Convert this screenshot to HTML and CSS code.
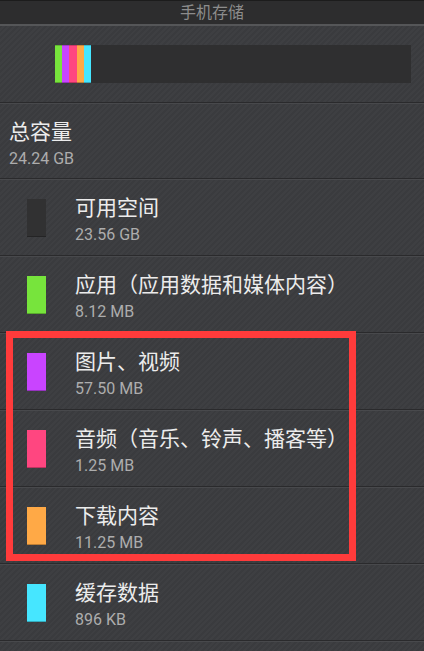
FILE: index.html
```html
<!DOCTYPE html>
<html lang="zh-CN">
<head>
    <meta charset="UTF-8">
    <meta name="viewport" content="width=device-width, initial-scale=1.0">
    <title>手机存储</title>
    <link rel="stylesheet" href="styles.css">
</head>
<body>
    <div class="screen">
        <div class="title-bar">手机存储</div>

        <div class="usage">
            <div class="usage-bar">
                <span class="seg green" style="width: 7px"></span>
                <span class="seg purple" style="width: 7px"></span>
                <span class="seg pink" style="width: 8px"></span>
                <span class="seg orange" style="width: 7px"></span>
                <span class="seg cyan" style="width: 7px"></span>
            </div>
        </div>

        <div class="total">
            <div class="item-title">总容量</div>
            <div class="item-size">24.24 GB</div>
        </div>

        <div class="item">
            <span class="swatch free"></span>
            <div class="item-text">
                <div class="item-title">可用空间</div>
                <div class="item-size">23.56 GB</div>
            </div>
        </div>
        <div class="item">
            <span class="swatch green"></span>
            <div class="item-text">
                <div class="item-title">应用（应用数据和媒体内容）</div>
                <div class="item-size">8.12 MB</div>
            </div>
        </div>
        <div class="item">
            <span class="swatch purple"></span>
            <div class="item-text">
                <div class="item-title">图片、视频</div>
                <div class="item-size">57.50 MB</div>
            </div>
        </div>
        <div class="item">
            <span class="swatch pink"></span>
            <div class="item-text">
                <div class="item-title">音频（音乐、铃声、播客等）</div>
                <div class="item-size">1.25 MB</div>
            </div>
        </div>
        <div class="item">
            <span class="swatch orange"></span>
            <div class="item-text">
                <div class="item-title">下载内容</div>
                <div class="item-size">11.25 MB</div>
            </div>
        </div>
        <div class="item">
            <span class="swatch cyan"></span>
            <div class="item-text">
                <div class="item-title">缓存数据</div>
                <div class="item-size">896 KB</div>
            </div>
        </div>

        <div class="highlight"></div>
    </div>
</body>
</html>
```

FILE: styles.css
```css
body {
    margin: 0;
    font-family: Roboto, "Noto Sans CJK SC", sans-serif;
    background-color: #3c3d40;
}
.screen {
    position: relative;
    width: 424px;
    height: 651px;
    overflow: hidden;
    background-color: #3c3d40;
    background-image: repeating-linear-gradient(135deg, #3e3f42 0 2px, #3a3b3e 2px 4px);
}
.title-bar {
    height: 23px;
    line-height: 24px;
    border-top: 1px solid #1c1c1c;
    border-bottom: 2px solid #555658;
    background-color: #2d2d2e;
    color: #8c8c8c;
    font-size: 16px;
    text-align: center;
}
.usage {
    height: 77px;
    padding: 19px 13px 0 55px;
    box-sizing: border-box;
    border-bottom: 1px solid #2a2a2c;
    box-shadow: 0 1px 0 #48494c;
}
.usage-bar {
    display: flex;
    height: 38px;
    background-color: #2f2f30;
}
.seg {
    box-sizing: border-box;
    border-top: 1px solid rgba(0,0,0,0.2);
    border-bottom: 1px solid rgba(0,0,0,0.25);
}
.green { background-color: #77e43c; }
.purple { background-color: #c944ff; }
.pink { background-color: #ff4680; }
.orange { background-color: #ffa946; }
.cyan { background-color: #46e6ff; }
.free { background-color: #313132; }
.total {
    height: 76px;
    padding: 16px 0 0 9px;
    box-sizing: border-box;
    border-bottom: 1px solid #2a2a2c;
    box-shadow: 0 1px 0 #48494c;
}
.item {
    display: flex;
    align-items: flex-start;
    height: 77px;
    padding: 20px 0 0 27px;
    box-sizing: border-box;
    border-bottom: 1px solid #2a2a2c;
    box-shadow: 0 1px 0 #48494c;
}
.swatch {
    flex: none;
    width: 19px;
    height: 38px;
    box-sizing: border-box;
    border-bottom: 1px solid rgba(0,0,0,0.25);
}
.item-text {
    margin-left: 29px;
    margin-top: -4px;
}
.item-title {
    font-size: 21px;
    line-height: 26px;
    color: #ececec;
    white-space: nowrap;
}
.item-size {
    margin-top: 4px;
    font-size: 16px;
    line-height: 20px;
    color: #adadad;
}
.highlight {
    position: absolute;
    left: 6px;
    top: 331px;
    width: 350px;
    height: 230px;
    box-sizing: border-box;
    border: 7px solid #ff3b3b;
}
```
